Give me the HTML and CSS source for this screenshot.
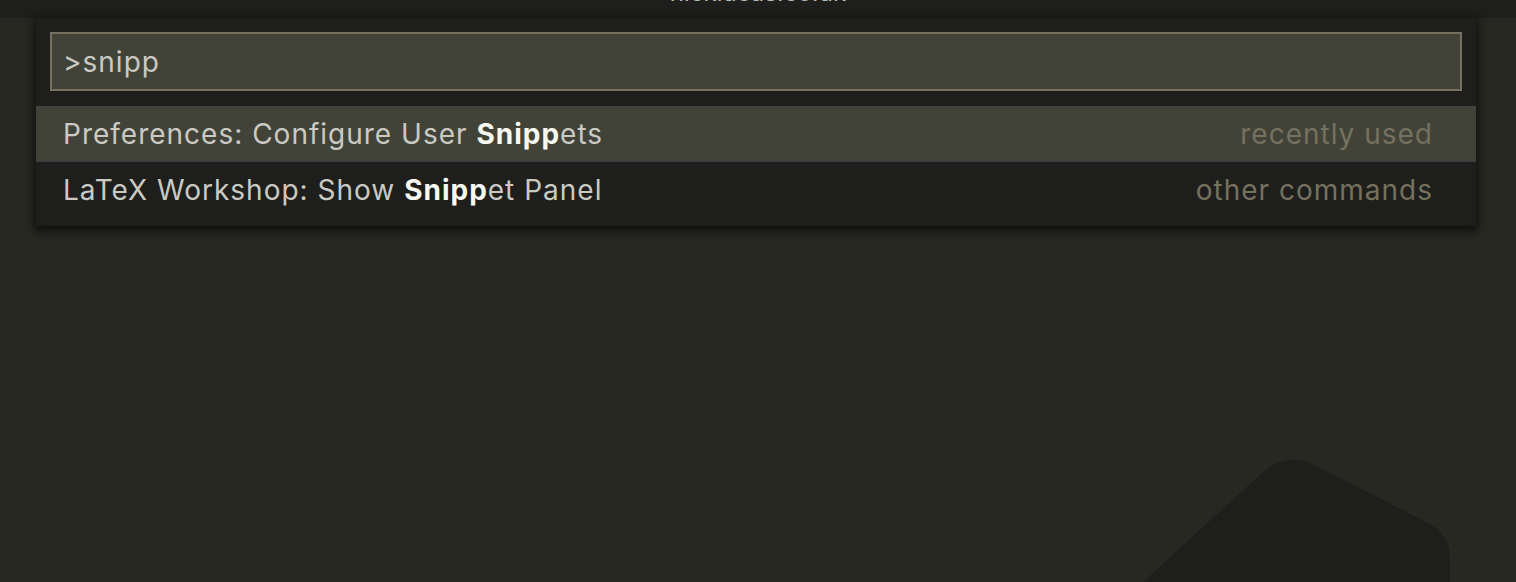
FILE: index.html
```html
<!DOCTYPE html>
<html>
<head>
<meta charset="utf-8">
<link rel="stylesheet" href="styles.css">
</head>
<body>
<div class="titlebar"><span class="title">nicklucas.co.uk</span></div>
<div class="workbench">
  <svg class="letterpress" width="416" height="142" viewBox="0 0 416 142">
    <path d="M43,142 L163,32 Q188,11 216,26 L328,83 Q350,95 350,118 L350,142 Z" fill="#1e1f1c"/>
  </svg>
  <div class="quick-input">
    <div class="input-box"><span class="input-text">&gt;snipp</span></div>
    <div class="list">
      <div class="row selected">
        <span class="label">Preferences: Configure User <b>Snipp</b>ets</span>
        <span class="desc">recently used</span>
      </div>
      <div class="row">
        <span class="label">LaTeX Workshop: Show <b>Snipp</b>et Panel</span>
        <span class="desc">other commands</span>
      </div>
    </div>
  </div>
</div>
</body>
</html>
```

FILE: styles.css
```css
html, body {
  margin: 0;
  padding: 0;
}
body {
  background: #272822;
  height: 582px;
  overflow: hidden;
  font-family: Inter, "Noto Sans", sans-serif;
}
.titlebar {
  height: 18px;
  background: #1e1f1c;
  overflow: hidden;
  text-align: center;
}
.title {
  display: block;
  font-size: 24px;
  line-height: 30px;
  margin-top: -22px;
  color: #bdbdb6;
}
.workbench {
  position: relative;
  height: 564px;
}
.letterpress {
  position: absolute;
  left: 1100px;
  top: 422px;
}
.quick-input {
  position: relative;
  margin-left: 36px;
  width: 1440px;
  background: #1e1f1c;
  box-shadow: 0 3px 9px 2px rgba(0, 0, 0, 0.65);
  padding: 14px 0 8px;
}
.input-box {
  margin: 0 14px;
  height: 55px;
  border: 2px solid #75715e;
  background: #414339;
  padding-left: 11px;
  display: flex;
  align-items: center;
  font-size: 28px;
  letter-spacing: 1px;
  color: #cacac3;
}
.list {
  margin-top: 15px;
}
.row {
  height: 56px;
  display: flex;
  align-items: center;
  justify-content: space-between;
  padding: 0 43px 0 27px;
  font-size: 28px;
  letter-spacing: 1px;
  color: #cacac3;
  box-sizing: border-box;
}
.row.selected {
  background: #414339;
  border-bottom: 1px solid #3b3a47;
}
.row b {
  color: #f8f8f2;
  font-weight: 700;
}
.desc {
  color: #75715e;
}
```
